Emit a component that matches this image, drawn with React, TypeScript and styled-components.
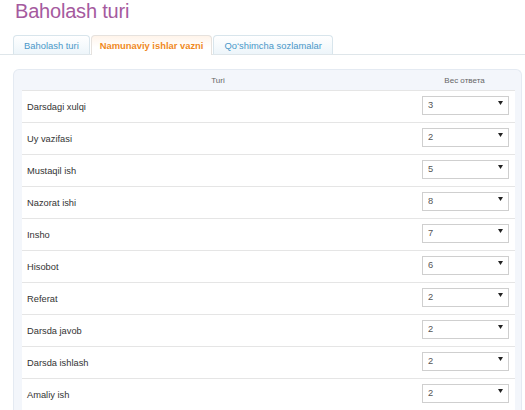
import React from "react";
import styled, { createGlobalStyle } from "styled-components";

const GlobalStyle = createGlobalStyle`
  html, body {
    margin: 0;
    padding: 0;
    background: #ffffff;
    font-family: "Liberation Sans", Arial, sans-serif;
  }
`;

const Page = styled.div`
  width: 525px;
  height: 410px;
  overflow: hidden;
`;

const Title = styled.h1`
  margin: 0;
  padding: 0 0 0 15px;
  height: 35px;
  font-size: 20px;
  line-height: 22px;
  font-weight: normal;
  color: #a55a9e;
  letter-spacing: -0.2px;
`;

const TabBar = styled.div`
  display: flex;
  gap: 1px;
  padding-left: 13px;
  height: 19px;
  border-bottom: 1px solid #dfe6ea;
`;

const Tab = styled.div<{ $active?: boolean; $pad: number }>`
  display: flex;
  align-items: center;
  padding: 0 ${(p) => p.$pad}px;
  height: ${(p) => (p.$active ? 20 : 19)}px;
  box-sizing: border-box;
  border: 1px solid ${(p) => (p.$active ? "#e6e2de" : "#d8e5ec")};
  border-bottom: none;
  border-radius: 4px 4px 0 0;
  background: ${(p) =>
    p.$active
      ? "linear-gradient(#fff4ea, #ffffff 60%)"
      : "linear-gradient(#ffffff, #edf5fa)"};
  color: ${(p) => (p.$active ? "#f0891c" : "#4a98c9")};
  font-size: 9.4px;
  font-weight: ${(p) => (p.$active ? "bold" : "normal")};
  white-space: nowrap;
`;

const Panel = styled.div`
  margin: 14px 3px 0 13px;
  padding: 0 6px 0 8px;
  background: #f3f6fb;
  border: 1px solid #e4eaf2;
  border-bottom: none;
  border-radius: 6px 6px 0 0;
`;

const Table = styled.table`
  width: 100%;
  border-collapse: collapse;
  table-layout: fixed;
`;

const TH = styled.th<{ $width?: number }>`
  height: 20px;
  padding: 0;
  font-size: 8px;
  font-weight: normal;
  color: #666;
  text-align: center;
  ${(p) => (p.$width ? `width: ${p.$width}px;` : "")}
`;

const TR = styled.tr`
  background: #ffffff;
  border-top: 1px solid #e5e5e5;
`;

const NameCell = styled.td`
  height: 31px;
  padding: 0 0 0 5px;
  font-size: 9.3px;
  color: #333;
  vertical-align: middle;
`;

const SelectCell = styled.td`
  padding: 3px 6px 0 8px;
  vertical-align: top;
`;

const SelectWrap = styled.div`
  position: relative;
  width: 87px;
  height: 19px;
`;

const Select = styled.select`
  appearance: none;
  width: 100%;
  height: 100%;
  margin: 0;
  padding: 0 0 0 5px;
  border: 1px solid #cfcfcf;
  border-radius: 0;
  background: #fff;
  font-family: "Liberation Sans", Arial, sans-serif;
  font-size: 9.3px;
  color: #555;
  outline: none;
`;

const Arrow = styled.svg`
  position: absolute;
  right: 6px;
  top: 7px;
  pointer-events: none;
`;

const rows: { name: string; value: number }[] = [
  { name: "Darsdagi xulqi", value: 3 },
  { name: "Uy vazifasi", value: 2 },
  { name: "Mustaqil ish", value: 5 },
  { name: "Nazorat ishi", value: 8 },
  { name: "Insho", value: 7 },
  { name: "Hisobot", value: 6 },
  { name: "Referat", value: 2 },
  { name: "Darsda javob", value: 2 },
  { name: "Darsda ishlash", value: 2 },
  { name: "Amaliy ish", value: 2 },
];

const options = [1, 2, 3, 4, 5, 6, 7, 8, 9, 10];

function App() {
  return (
    <Page>
      <GlobalStyle />
      <Title>Baholash turi</Title>
      <TabBar>
        <Tab $pad={10}>Baholash turi</Tab>
        <Tab $pad={8} $active>
          Namunaviy ishlar vazni
        </Tab>
        <Tab $pad={10}>Qo‘shimcha sozlamalar</Tab>
      </TabBar>
      <Panel>
        <Table>
          <thead>
            <tr>
              <TH>Turi</TH>
              <TH $width={101}>Вес ответа</TH>
            </tr>
          </thead>
          <tbody>
            {rows.map((row) => (
              <TR key={row.name}>
                <NameCell>{row.name}</NameCell>
                <SelectCell>
                  <SelectWrap>
                    <Select defaultValue={row.value}>
                      {options.map((o) => (
                        <option key={o} value={o}>
                          {o}
                        </option>
                      ))}
                    </Select>
                    <Arrow width="5" height="4" viewBox="0 0 5 4">
                      <path d="M0 0 H5 L2.5 4 Z" fill="#222" />
                    </Arrow>
                  </SelectWrap>
                </SelectCell>
              </TR>
            ))}
          </tbody>
        </Table>
      </Panel>
    </Page>
  );
}

export default App;
